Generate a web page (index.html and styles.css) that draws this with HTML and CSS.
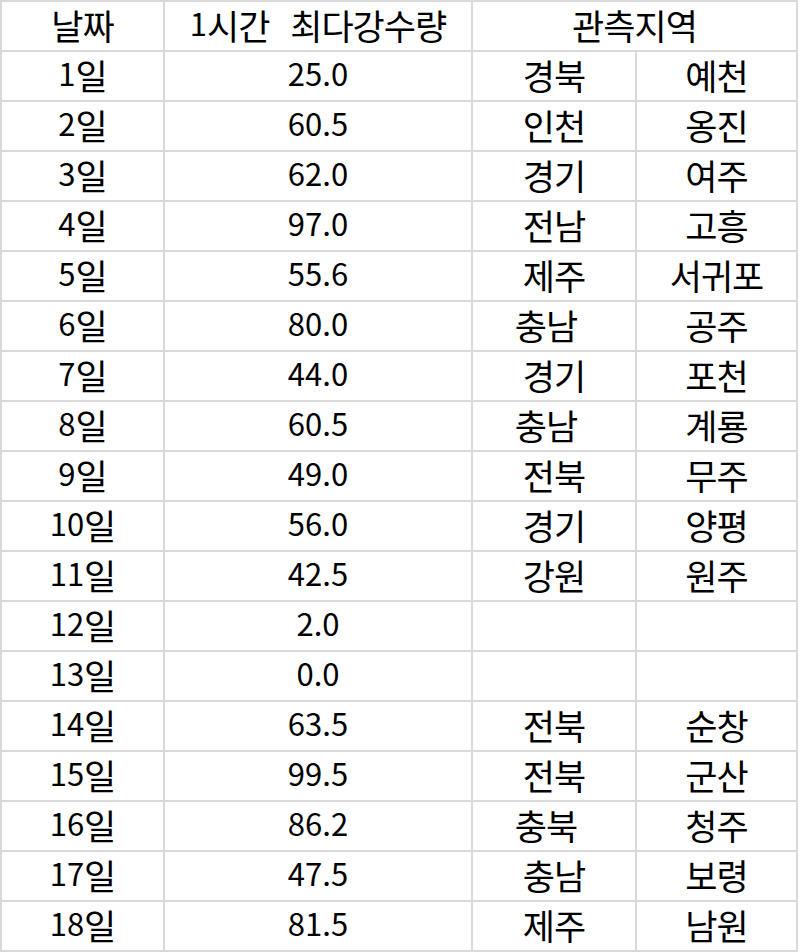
FILE: index.html
```html
<!DOCTYPE html>
<html lang="ko">
<head>
<meta charset="utf-8">
<title>강수량</title>
<link rel="stylesheet" href="styles.css">
</head>
<body>
<div class="sheet">
  <div class="cell ko">날짜</div><div class="cell">1<span class="kc wide">시간 최다강수량</span></div><div class="cell ko span2">관측지역</div>
  <div class="cell">1<span class="kc">일</span></div><div class="cell">25.0</div><div class="cell ko">경북</div><div class="cell ko">예천</div>
  <div class="cell">2<span class="kc">일</span></div><div class="cell">60.5</div><div class="cell ko">인천</div><div class="cell ko">옹진</div>
  <div class="cell">3<span class="kc">일</span></div><div class="cell">62.0</div><div class="cell ko">경기</div><div class="cell ko">여주</div>
  <div class="cell">4<span class="kc">일</span></div><div class="cell">97.0</div><div class="cell ko">전남</div><div class="cell ko">고흥</div>
  <div class="cell">5<span class="kc">일</span></div><div class="cell">55.6</div><div class="cell ko">제주</div><div class="cell ko">서귀포</div>
  <div class="cell">6<span class="kc">일</span></div><div class="cell">80.0</div><div class="cell ko trail">충남</div><div class="cell ko">공주</div>
  <div class="cell">7<span class="kc">일</span></div><div class="cell">44.0</div><div class="cell ko">경기</div><div class="cell ko">포천</div>
  <div class="cell">8<span class="kc">일</span></div><div class="cell">60.5</div><div class="cell ko trail">충남</div><div class="cell ko">계룡</div>
  <div class="cell">9<span class="kc">일</span></div><div class="cell">49.0</div><div class="cell ko">전북</div><div class="cell ko">무주</div>
  <div class="cell">10<span class="kc">일</span></div><div class="cell">56.0</div><div class="cell ko">경기</div><div class="cell ko">양평</div>
  <div class="cell">11<span class="kc">일</span></div><div class="cell">42.5</div><div class="cell ko">강원</div><div class="cell ko">원주</div>
  <div class="cell">12<span class="kc">일</span></div><div class="cell">2.0</div><div class="cell"></div><div class="cell"></div>
  <div class="cell">13<span class="kc">일</span></div><div class="cell">0.0</div><div class="cell"></div><div class="cell"></div>
  <div class="cell">14<span class="kc">일</span></div><div class="cell">63.5</div><div class="cell ko">전북</div><div class="cell ko">순창</div>
  <div class="cell">15<span class="kc">일</span></div><div class="cell">99.5</div><div class="cell ko">전북</div><div class="cell ko">군산</div>
  <div class="cell">16<span class="kc">일</span></div><div class="cell">86.2</div><div class="cell ko trail">충북</div><div class="cell ko">청주</div>
  <div class="cell">17<span class="kc">일</span></div><div class="cell">47.5</div><div class="cell ko">충남</div><div class="cell ko">보령</div>
  <div class="cell">18<span class="kc">일</span></div><div class="cell">81.5</div><div class="cell ko">제주</div><div class="cell ko">남원</div>
</div>
</body>
</html>
```
FILE: styles.css
```css
html, body {
  margin: 0;
  padding: 0;
  background: #ffffff;
}

body {
  width: 800px;
  height: 952px;
  overflow: hidden;
  font-family: "Noto Sans CJK KR", "Noto Sans", sans-serif;
}

.sheet {
  display: grid;
  grid-template-columns: 161px 306px 162px 159px;
  grid-auto-rows: 48px;
  gap: 2px;
  padding: 2px;
  width: max-content;
  background: #d9d9d9;
}

.cell {
  background: #ffffff;
  color: #000000;
  font-size: 31px;
  line-height: 42px;
  text-align: center;
  white-space: nowrap;
}

.ko {
  font-size: 35px;
  line-height: 46.5px;
  letter-spacing: -1px;
}

.kc {
  font-size: 35px;
  line-height: 42px;
  letter-spacing: -1px;
  vertical-align: -4px;
}

.wide {
  word-spacing: 12px;
}

.span2 {
  grid-column: span 2;
}

.trail {
  padding-right: 16px;
}
```
